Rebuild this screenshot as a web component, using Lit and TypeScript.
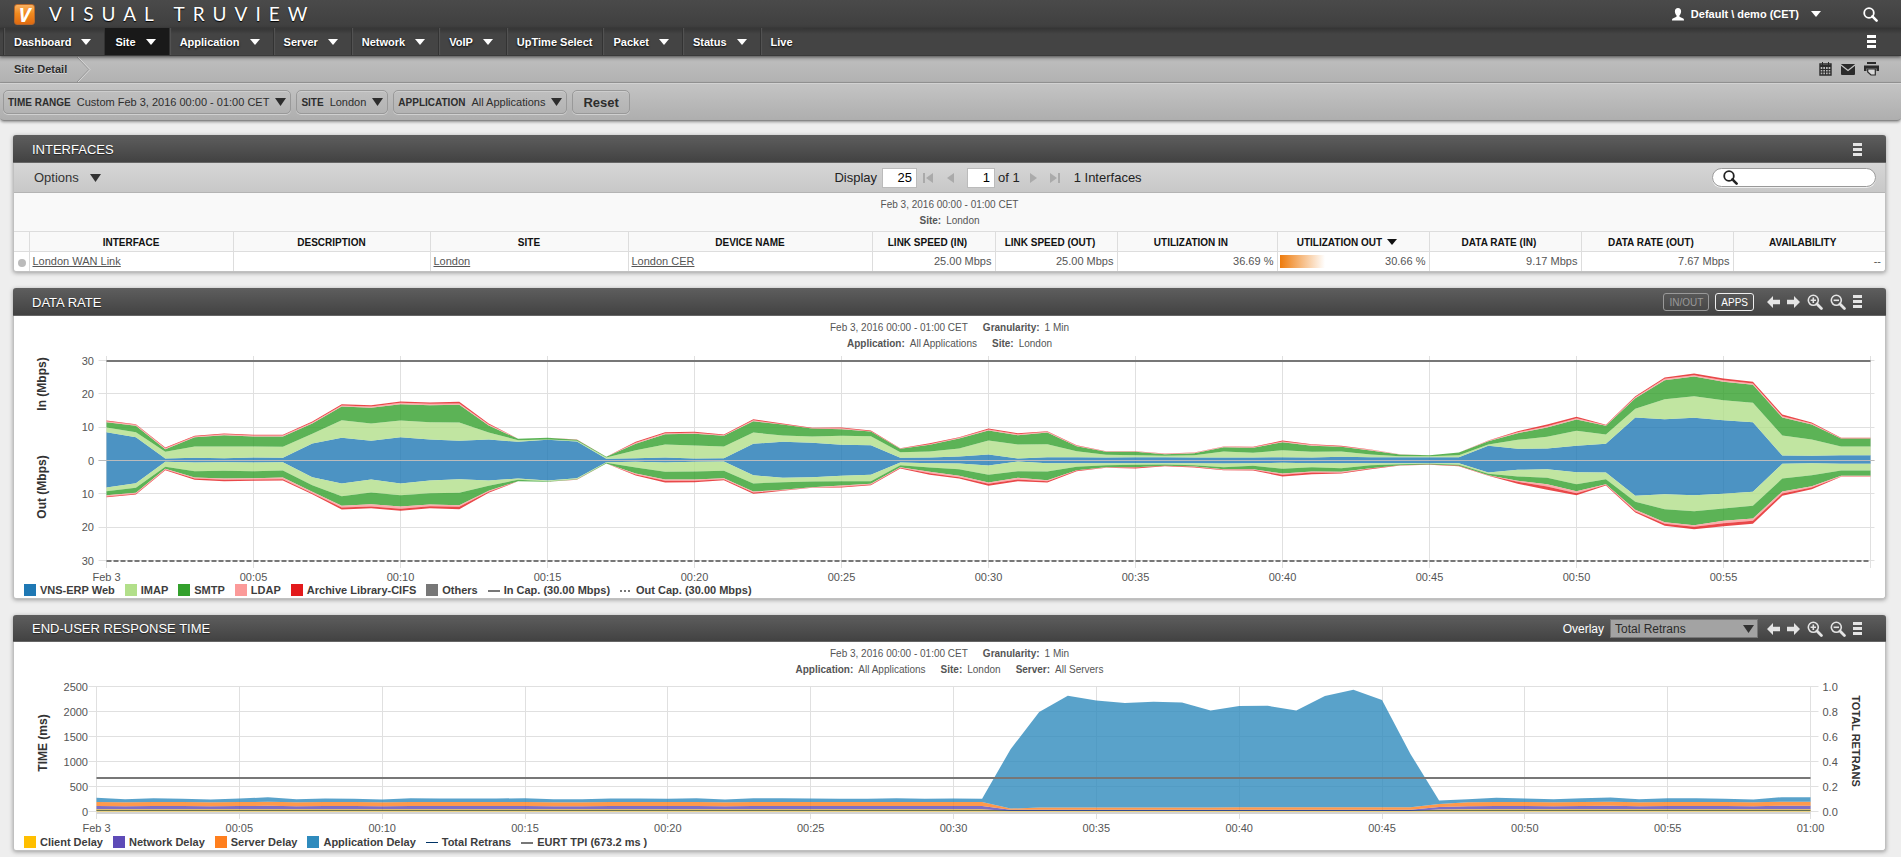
import { LitElement, html, svg, css, nothing, type TemplateResult } from "lit";
import { customElement, property, state } from "lit/decorators.js";
import { classMap } from "lit/directives/class-map.js";

/* ---------- data ---------- */

const NAV = [
  { label: "Dashboard", menu: true },
  { label: "Site", menu: true, active: true },
  { label: "Application", menu: true },
  { label: "Server", menu: true },
  { label: "Network", menu: true },
  { label: "VoIP", menu: true },
  { label: "UpTime Select", menu: false },
  { label: "Packet", menu: true },
  { label: "Status", menu: true },
  { label: "Live", menu: false },
];

const FILTERS = [
  { name: "TIME RANGE", value: "Custom Feb 3, 2016 00:00 - 01:00 CET" },
  { name: "SITE", value: "London" },
  { name: "APPLICATION", value: "All Applications" },
];

const COLUMNS = [
  { title: "", width: 16 },
  { title: "INTERFACE", width: 204 },
  { title: "DESCRIPTION", width: 197 },
  { title: "SITE", width: 198 },
  { title: "DEVICE NAME", width: 244 },
  { title: "LINK SPEED (IN)", width: 123, numeric: true },
  { title: "LINK SPEED (OUT)", width: 122, numeric: true },
  { title: "UTILIZATION IN", width: 160, numeric: true },
  { title: "UTILIZATION OUT", width: 152, numeric: true, sorted: true },
  { title: "DATA RATE (IN)", width: 152, numeric: true },
  { title: "DATA RATE (OUT)", width: 152, numeric: true },
  { title: "AVAILABILITY", width: 151, numeric: true },
];
const TOTAL_WIDTH = COLUMNS.reduce((sum, c) => sum + c.width, 0);

/* One row per minute, cumulative Mbps: VNS-ERP Web, IMAP, SMTP, LDAP, CIFS. */
const RATE_IN: number[][] = [
  [8.5, 9.9, 11.5, 11.8, 12], [7, 8.5, 10.4, 10.7, 10.9], [0.6, 2.6, 3.4, 3.7, 3.9],
  [0.8, 4.2, 7, 7.2, 7.4], [0.7, 4.2, 7.6, 7.9, 8.1], [0.9, 4.2, 7.2, 7.5, 7.7],
  [0.8, 4.1, 7.2, 7.5, 7.7], [5.1, 8, 11.1, 11.4, 11.7], [6.8, 12.1, 16.2, 16.5, 16.9],
  [5.9, 11.1, 15.8, 16.2, 16.6], [7, 12, 16.9, 17.3, 17.7], [6.3, 11.5, 16.6, 17, 17.4],
  [5.9, 11.4, 16.7, 17.1, 17.6], [6.3, 8.4, 10.5, 10.8, 11.1], [5.6, 6.1, 6.5, 6.5, 6.5],
  [6.2, 6.3, 6.8, 6.8, 6.8], [5.7, 5.9, 6.2, 6.2, 6.3], [0.5, 0.9, 1.1, 1.1, 1.1],
  [0.7, 3.1, 5, 5.3, 5.6], [0.9, 4.8, 7.9, 8.2, 8.5], [0.6, 4.5, 8, 8.3, 8.6],
  [0.7, 4.2, 7.4, 7.6, 7.8], [5, 8.4, 11.8, 12.1, 12.4], [5.6, 7.5, 10.8, 10.9, 11.1],
  [5.3, 7.2, 9.6, 9.7, 9.8], [4.7, 7.4, 9.4, 9.7, 9.9], [4.6, 7.3, 8.7, 8.8, 9],
  [0.8, 2.5, 3.5, 3.6, 3.7], [0.9, 2.7, 4.7, 4.9, 5.2], [1.2, 3.6, 6.6, 6.8, 7],
  [1.8, 6, 9, 9.3, 9.6], [0.6, 4.8, 7.6, 7.9, 8.2], [1, 4.9, 8.4, 8.6, 8.8],
  [1, 2.8, 4.3, 4.4, 4.6], [0.9, 1.7, 2.6, 2.7, 2.8], [1, 1.6, 2.6, 2.7, 2.8],
  [1, 1.4, 1.9, 2, 2.1], [0.9, 1.6, 2.2, 2.3, 2.4], [0.9, 2.7, 4, 4.1, 4.2],
  [0.9, 2.3, 3.8, 4, 4.1], [1, 3.1, 5.5, 5.7, 6], [0.9, 2.6, 4.4, 4.7, 4.9],
  [1.1, 2.7, 4.1, 4.2, 4.4], [1, 1.8, 3, 3.2, 3.3], [1, 1.3, 1.8, 1.9, 1.9],
  [1, 1.3, 1.6, 1.6, 1.6], [1, 1.6, 2.4, 2.4, 2.4], [4.4, 4.8, 5.8, 5.9, 6],
  [3.5, 6.2, 8.2, 8.5, 8.8], [3.6, 7.1, 9.9, 10.3, 10.8], [4.4, 8.9, 12.3, 12.7, 13.1],
  [5, 7.8, 10.4, 10.6, 10.7], [12.9, 15.5, 18.7, 19, 19.3], [12.4, 18.4, 24.1, 24.5, 24.9],
  [12.8, 19.3, 25.2, 25.6, 26.1], [12.1, 18.1, 23.6, 24.1, 24.6], [11.5, 17.3, 22.7, 23.1, 23.6],
  [1.5, 7.5, 12.9, 13.3, 13.8], [1.4, 6.3, 10.8, 11.1, 11.4], [1.6, 4.2, 6.6, 6.7, 6.8],
  [1.6, 4.2, 6.6, 6.7, 6.8],
];

const RATE_OUT: number[][] = [
  [8.1, 9.2, 10.4, 10.8, 11], [6.8, 8.2, 9.7, 10, 10.2], [0.4, 1.9, 2.5, 2.7, 2.9],
  [0.6, 3.2, 5.1, 5.4, 5.8], [0.5, 3.1, 5.4, 5.8, 6.2], [0.6, 3.2, 5.3, 5.7, 6.1],
  [0.5, 3, 5.1, 5.6, 6], [5, 7.4, 9.4, 9.8, 10.1], [6.9, 10.7, 13.6, 14.1, 14.7],
  [5.7, 9.6, 13.1, 13.8, 14.3], [6.9, 10.4, 13.8, 14.5, 15.1], [6, 9.8, 13.2, 13.7, 14.3],
  [5.6, 9.7, 13.4, 13.9, 14.6], [6, 7.6, 9.1, 9.4, 9.7], [5.4, 5.8, 6.2, 6.2, 6.2],
  [6, 6.2, 6.4, 6.4, 6.4], [5.3, 5.6, 5.7, 5.7, 5.8], [0.5, 0.7, 0.9, 0.9, 0.9],
  [0.4, 2.1, 3.9, 4.2, 4.5], [0.6, 3.4, 5.7, 6.1, 6.6], [0.4, 3.3, 5.7, 6.1, 6.5],
  [0.3, 3.1, 5.3, 5.6, 5.9], [4.4, 6.9, 9.3, 9.6, 10], [5.2, 6.5, 8.8, 8.9, 9.1],
  [5, 6.3, 8, 8.1, 8.2], [4.6, 6.2, 7.5, 7.9, 8.1], [4.3, 6.2, 7, 7.2, 7.4],
  [0.6, 1.4, 2, 2.2, 2.4], [0.8, 2.1, 3.4, 3.8, 4.3], [0.9, 2.6, 4.6, 5, 5.4],
  [1.5, 4.3, 6.6, 7, 7.6], [0.3, 3.2, 5.2, 5.7, 6.2], [0.8, 3.3, 5.9, 6.2, 6.6],
  [0.8, 1.9, 2.9, 3, 3.2], [0.8, 1.4, 2, 2.1, 2.2], [0.8, 1.3, 2, 2.1, 2.4],
  [0.8, 1.2, 1.6, 1.6, 1.7], [0.8, 1.4, 1.8, 1.9, 2.1], [0.9, 2, 2.6, 2.8, 2.9],
  [0.8, 1.6, 2.6, 2.8, 3], [0.7, 2.5, 3.9, 4.3, 4.8], [0.8, 2, 3.3, 3.6, 4.1],
  [0.8, 2.3, 3.4, 3.7, 3.9], [0.8, 1.4, 2.3, 2.4, 2.6], [0.8, 1.1, 1.4, 1.4, 1.5],
  [0.8, 1, 1.2, 1.2, 1.3], [0.8, 1.3, 1.6, 1.6, 1.7], [3.6, 4, 4.4, 4.5, 4.6],
  [2.8, 4.8, 6.1, 6.4, 7], [2.6, 5.2, 7.1, 7.8, 8.8], [3.5, 7.1, 9.2, 9.8, 10.4],
  [3.6, 5.6, 7.1, 7.3, 7.5], [10.6, 12.4, 14.8, 15.2, 15.6], [10.1, 14.6, 18.5, 19, 19.6],
  [10.4, 15.2, 19.4, 19.9, 20.6], [10, 14.4, 18.1, 18.8, 19.7], [9.4, 13.6, 17.4, 18.1, 19],
  [1, 5.4, 9.3, 9.9, 10.6], [0.8, 4.4, 7.7, 8.1, 8.6], [1, 3, 4.6, 4.8, 4.9],
  [1, 3, 4.6, 4.8, 4.9],
];

const RATE_COLORS = ["#1f78b4", "#b2df8a", "#33a02c", "#fb9a99", "#e31a1c"];

/* Total response time in ms for each minute. */
const RESPONSE = [
  273, 247, 267, 253, 240, 260, 283, 247, 260, 253, 240, 267, 260, 260, 260, 267, 247, 247, 260, 260,
  253, 263, 240, 267, 267, 260, 253, 257, 263, 253, 260, 253, 1247, 1987, 2313, 2220, 2167, 2193, 2180,
  2020, 2107, 2113, 2020, 2307, 2433, 2227, 1147, 220, 247, 273, 260, 247, 267, 280, 247, 267, 267, 253,
  240, 287, 287,
];

/* Cumulative ms: client, network, server, application. */
const DELAYS: number[][] = RESPONSE.map((total, m) => {
  if (m >= 32 && m <= 46) return [12, 36, m === 32 ? 58 : m < 40 ? 80 : 86, total];
  if (m === 47) return [40, 90, 150, total];
  const swing = (total - 255) / 4;
  return [46, 108 + swing, 188 + swing, total];
});

const DELAY_COLORS = ["#ffbf00", "#5e4bb7", "#ff7f1e", "#2f8bbd"];

/* ---------- shared pieces ---------- */

const caret = (cls = "") => html`<svg class="caret ${cls}" width="10" height="6" viewBox="0 0 10 6" preserveAspectRatio="none" aria-hidden="true"><path d="M0 0h10L5 6z" fill="currentColor"/></svg>`;
const bars = html`<svg width="9" height="14" viewBox="0 0 9 14" aria-hidden="true"><path d="M0 0h9v3H0zM0 5h9v3H0zM0 10h9v3H0z" fill="currentColor"/></svg>`;
const magnifier = html`<svg width="15" height="15" viewBox="0 0 15 15" aria-hidden="true"><circle cx="6" cy="6" r="4.8" fill="none" stroke="currentColor" stroke-width="1.8"/><path d="M9.4 9.4l4.2 4.2" stroke="currentColor" stroke-width="2.6" stroke-linecap="round"/></svg>`;
const zoomIcon = (plus: boolean) => html`<svg width="16" height="16" viewBox="0 0 16 16" aria-hidden="true"><circle cx="6.3" cy="6.3" r="5" fill="none" stroke="currentColor" stroke-width="1.6"/><path d="M10 10l4.4 4.4" stroke="currentColor" stroke-width="2.8" stroke-linecap="round"/><path d="M3.6 6.3h5.4${plus ? "M6.3 3.6v5.4" : ""}" stroke="currentColor" stroke-width="1.6"/></svg>`;
const arrow = (right: boolean) => html`<svg width="13" height="12" viewBox="0 0 13 12" aria-hidden="true"><path d=${right ? "M13 6L7 0v3.7H0v4.6h7V12z" : "M0 6l6-6v3.7h7v4.6H6V12z"} fill="currentColor"/></svg>`;

const base = css`
  * { box-sizing: border-box; }
  button { font: inherit; color: inherit; background: none; border: 0; padding: 0; margin: 0; cursor: pointer; display: inline-flex; align-items: center; }
  svg { display: block; flex: none; }
`;

/* ---------- header ---------- */

@customElement("top-header")
class TopHeader extends LitElement {
  static styles = [base, css`
    :host { display: block; color: #fff; font-weight: bold; font-size: 11px; }
    .brand { display: flex; align-items: center; height: 28px; padding: 0 23px 0 14px; background: linear-gradient(#4a4a4a, #3f3f3f); }
    .mark { width: 21px; height: 21px; border-radius: 3px; background: linear-gradient(#f9b060, #f08a1e 45%, #e06a10); border: 1px solid #b8682a; font: italic bold 20px/19px "Open Sans", sans-serif; text-align: center; }
    .name { margin: 0 auto 0 14px; font: 400 19px/26px Lato, sans-serif; letter-spacing: 8px; text-shadow: 0 1px 1px #000; }
    .user { gap: 7px; }
    .user .caret { margin-left: 5px; }
    .find { margin-left: 42px; }
    .bar { display: flex; align-items: stretch; height: 28px; padding: 0 25px 0 3px; background: linear-gradient(#343434, #444 6px, #444); border-bottom: 1px solid #3a3a3a; box-shadow: 0 1px 3px rgba(0, 0, 0, .5); position: relative; }
    .tabs { display: flex; margin-right: auto; }
    .tab { padding: 0 13px 0 10px; gap: 10px; border-left: 1px solid #333; box-shadow: inset 1px 0 1px #555; text-shadow: 0 1px 2px #000; }
    .tab.active { background: #191919; box-shadow: none; }
    .tab.plain { padding: 0 10px; }
  `];
  render() {
    return html`
      <header>
        <div class="brand">
          <span class="mark">V</span>
          <span class="name">VISUAL TRUVIEW</span>
          <button class="user" type="button">
            <svg width="12" height="13" viewBox="0 0 12 13" aria-hidden="true"><path d="M6 0c2 0 3.2 1.4 3.1 3.4C9 5.200 8.300 6.500 7.500 7.300v1.400l3.700 1.700c.6.300.8.800.8 2.100H0c0-1.300.2-1.800.8-2.100l3.700-1.700V7.300C3.700 6.500 3 5.200 2.900 3.400 2.800 1.400 4 0 6 0z" fill="currentColor"/></svg>
            <span>Default \\ demo (CET)</span>
            ${caret()}
          </button>
          <button class="find" type="button" aria-label="Search">${magnifier}</button>
        </div>
        <nav class="bar">
          <div class="tabs">
            ${NAV.map((n) => html`<button type="button" class=${classMap({ tab: true, active: !!n.active, plain: !n.menu })}>${n.label}${n.menu ? caret() : nothing}</button>`)}
          </div>
          <button type="button" aria-label="Menu">${bars}</button>
        </nav>
      </header>`;
  }
}

@customElement("filter-bar")
class FilterBar extends LitElement {
  static styles = [base, css`
    :host { display: block; color: #2d2d2d; text-shadow: 0 1px 0 rgba(255, 255, 255, .5); }
    .crumbs { display: flex; align-items: center; height: 27px; padding: 0 22px 0 14px; background: linear-gradient(#a4a4a4, #bcbcbc 6px, #b2b2b2); border-bottom: 1px solid #999; font-weight: bold; font-size: 11px; }
    .crumbs a { color: inherit; text-decoration: none; }
    .sep { margin: 0 auto 0 10px; }
    .tools { display: flex; align-items: center; gap: 9px; }
    .filters { display: flex; align-items: center; gap: 5px; height: 38px; padding: 0 3px; background: linear-gradient(#c4c4c4, #aeaeae); border-top: 1px solid #d2d2d2; border-bottom: 1px solid #888; border-radius: 0 0 4px 4px; box-shadow: 0 1px 3px rgba(0, 0, 0, .4); }
    .pill { height: 24px; padding: 0 4px; gap: 6px; border: 1px solid #999; border-radius: 5px; box-shadow: 0 1px 0 #d0d0d0, inset 0 1px 0 #cdcdcd; background: linear-gradient(#bfbfbf, #b3b3b3); }
    .pill b { font-size: 10px; }
    .pill span { font-size: 11px; }
    .pill.reset { padding: 0 10px; font-weight: bold; font-size: 13px; }
    .pill .caret { width: 11px; height: 8px; }
  `];
  render() {
    return html`
      <div class="crumbs">
        <a href="#site">Site Detail</a>
        <svg class="sep" width="14" height="25" viewBox="0 0 14 25" aria-hidden="true"><path d="M0 0l12 12.500L0 25" fill="none" stroke="#8e8e8e"/><path d="M1 0l12 12.500L1 25" fill="none" stroke="#d8d8d8"/></svg>
        <div class="tools">
          <button type="button" aria-label="Schedule"><svg width="13" height="14" viewBox="0 0 13 14"><path d="M1 2h11v11H1z" fill="none" stroke="#2b2b2b" stroke-width="1.4"/><path d="M1 3h11v2H1z" fill="#2b2b2b"/><path d="M1 7.500h11M1 10h11M3.800 5v8M6.500 5v8M9.200 5v8M3.500 0v3M9.500 0v3" stroke="#2b2b2b"/></svg></button>
          <button type="button" aria-label="Mail"><svg width="14" height="12" viewBox="0 0 14 12"><rect y="1" width="14" height="11" rx="1" fill="#2b2b2b"/><path d="M0 2l7 5.500L14 2" fill="none" stroke="#c8c8c8" stroke-width="1.200"/></svg></button>
          <button type="button" aria-label="Print"><svg width="15" height="14" viewBox="0 0 15 14"><path d="M3 0h9v2H3zM0 3.500h15V9h-2.500V6.500h-10V9H0z" fill="#2b2b2b"/><path d="M3.700 7h7.600v6H7L3.700 10z" fill="#d8d8d8" stroke="#2b2b2b" stroke-width="1.200"/></svg></button>
        </div>
      </div>
      <div class="filters">
        ${FILTERS.map((f) => html`<button type="button" class="pill"><b>${f.name}</b><span>${f.value}</span>${caret()}</button>`)}
        <button type="button" class="pill reset">Reset</button>
      </div>`;
  }
}

/* ---------- panel ---------- */

@customElement("report-panel")
class ReportPanel extends LitElement {
  static styles = [base, css`
    :host { display: block; background: #fff; border: 1px solid #c0c0c0; border-top: 0; border-radius: 3px; box-shadow: 0 1px 4px rgba(0, 0, 0, .35); }
    .head { display: flex; align-items: center; height: 28px; margin: 0 -1px; padding: 2px 24px 0 19px; border-radius: 3px 3px 0 0; background: linear-gradient(#5e5e5e, #424242); border-bottom: 1px solid #666; color: #e4e4e4; }
    :host([compact]) .head { height: 27px; }
    h2 { margin: 0 auto 0 0; font-size: 13px; font-weight: normal; color: #fff; text-shadow: 0 1px 1px #222; }
    .nav { display: flex; align-items: center; gap: 7px; margin-left: 13px; }
    .more { margin-left: 7px; }
  `];
  @property() heading = "";
  @property({ type: Boolean }) zoomable = false;
  render() {
    return html`
      <section>
        <div class="head">
          <h2>${this.heading}</h2>
          <slot name="actions"></slot>
          ${this.zoomable ? html`<div class="nav">
            <button type="button" aria-label="Back">${arrow(false)}</button>
            <button type="button" aria-label="Forward">${arrow(true)}</button>
            <button type="button" aria-label="Zoom in">${zoomIcon(true)}</button>
            <button type="button" aria-label="Zoom out">${zoomIcon(false)}</button>
          </div>` : nothing}
          <button class="more" type="button" aria-label="Panel menu">${bars}</button>
        </div>
        <slot></slot>
      </section>`;
  }
}

/* ---------- interfaces table ---------- */

@customElement("interface-table")
class InterfaceTable extends LitElement {
  static styles = [base, css`
    :host { display: block; color: #555; font-size: 11px; }
    .bar { display: grid; grid-template-columns: 1fr auto 1fr; align-items: center; height: 30px; padding: 0 9px 0 20px; background: linear-gradient(#d6d6d6, #c8c8c8); border-bottom: 1px solid #b4b4b4; color: #222; font-size: 13px; }
    .options { gap: 11px; justify-self: start; color: #333; }
    .options .caret { width: 11px; height: 8px; }
    .pager { display: flex; align-items: center; padding-left: 66px; }
    .pager input { height: 20px; margin: 0 0 0 5px; padding: 2px 4px; border: 1px solid #bbb; background: #fff; font: inherit; text-align: right; color: #000; }
    .rows { width: 35px; }
    .pages { width: 28px; }
    .step { color: #aaa; }
    .first { margin-left: 6px; }
    .prev { margin: 0 8px 0 14px; }
    .of { margin-left: 3px; }
    .next { margin-left: 10px; }
    .last { margin: 0 14px 0 13px; }
    .search { justify-self: end; display: flex; align-items: center; gap: 4px; width: 164px; height: 19px; padding: 0 10px; border: 1px solid #999; border-radius: 10px; background: #fff; box-shadow: 0 1px 0 #eee; }
    .search input { flex: 1; min-width: 0; height: 15px; border: 0; padding: 0; outline: 0; background: none; font: inherit; }
    .meta { height: 38px; padding-top: 4px; background: #f9f9f9; }
    table { width: 100%; border-collapse: collapse; table-layout: fixed; }
    th, td { border: 1px solid #ddd; height: 19px; padding: 0 4px 0 2px; white-space: nowrap; overflow: hidden; }
    tr > :first-child { border-left: 0; padding: 0; }
    tr > :last-child { border-right: 0; }
    tbody td { border-bottom: 0; }
    th { height: 20px; padding-top: 2px; background: #f9f9f9; color: #111; font-size: 10px; }
    th.numeric { padding-right: 16px; }
    th .caret { display: inline-block; margin-left: 5px; vertical-align: 1px; }
    td a { color: inherit; }
    .num { text-align: right; }
    .dot { width: 8px; height: 8px; margin: 3px auto 0; border-radius: 50%; background: #bbb; }
    .meter { display: flex; align-items: center; justify-content: space-between; }
    .level { height: 13px; background: linear-gradient(90deg, #ee7b0c, #fff); }
  `];
  render() {
    return html`
      <div class="bar">
        <button class="options" type="button">Options ${caret()}</button>
        <div class="pager">
          <label for="rows">Display</label><input id="rows" class="rows" value="25">
          <button type="button" class="step first" aria-label="First page"><svg width="10" height="10" viewBox="0 0 10 10"><path d="M0 0h2v10H0zM10 0v10L3 5z" fill="currentColor"/></svg></button>
          <button type="button" class="step prev" aria-label="Previous page"><svg width="7" height="10" viewBox="0 0 7 10"><path d="M7 0v10L0 5z" fill="currentColor"/></svg></button>
          <input class="pages" aria-label="Page" value="1"><span class="of">of 1</span>
          <button type="button" class="step next" aria-label="Next page"><svg width="7" height="10" viewBox="0 0 7 10"><path d="M0 0v10l7-5z" fill="currentColor"/></svg></button>
          <button type="button" class="step last" aria-label="Last page"><svg width="10" height="10" viewBox="0 0 10 10"><path d="M8 0h2v10H8zM0 0v10l7-5z" fill="currentColor"/></svg></button>
          <span>1 Interfaces</span>
        </div>
        <label class="search">${magnifier}<input type="search" aria-label="Search interfaces"></label>
      </div>
      <div class="meta"><meta-lines .lines=${[[["", "Feb 3, 2016 00:00 - 01:00 CET"]], [["Site:", "London"]]]}></meta-lines></div>
      <table>
        <colgroup>${COLUMNS.map((c) => html`<col style="width:${(c.width / TOTAL_WIDTH) * 100}%">`)}</colgroup>
        <thead><tr>${COLUMNS.map((c) => html`<th scope="col" class=${c.numeric ? "numeric" : ""}>${c.title}${c.sorted ? caret() : nothing}</th>`)}</tr></thead>
        <tbody><tr>
          <td><div class="dot"></div></td>
          <td><a href="#link">London WAN Link</a></td>
          <td></td>
          <td><a href="#site">London</a></td>
          <td><a href="#device">London CER</a></td>
          <td class="num">25.00 Mbps</td>
          <td class="num">25.00 Mbps</td>
          <td class="num">36.69 %</td>
          <td><div class="meter"><span class="level" style="width:30.66%"></span><span>30.66 %</span></div></td>
          <td class="num">9.17 Mbps</td>
          <td class="num">7.67 Mbps</td>
          <td class="num">--</td>
        </tr></tbody>
      </table>`;
  }
}

@customElement("meta-lines")
class MetaLines extends LitElement {
  static styles = css`
    :host { display: block; font-size: 10px; line-height: 16px; text-align: center; color: #555; }
    .line { display: flex; justify-content: center; gap: 15px; }
    b { margin-right: 5px; }
  `;
  @property({ attribute: false }) lines: [string, string][][] = [];
  render() {
    return this.lines.map((l) => html`<div class="line">${l.map(([k, v]) => html`<span>${k ? html`<b>${k}</b>` : nothing}${v}</span>`)}</div>`);
  }
}

@customElement("chart-legend")
class ChartLegend extends LitElement {
  static styles = css`
    :host { display: flex; flex-wrap: wrap; gap: 10px; padding: 1px 10px; font-weight: bold; font-size: 11px; line-height: 14px; color: #3d3d3d; }
    .item { display: flex; align-items: center; gap: 4px; }
    svg { display: block; }
  `;
  @property({ attribute: false }) items: { label: string; color: string; kind?: string }[] = [];
  render() {
    return this.items.map((i) => html`<span class="item"><svg width="12" height="12" viewBox="0 0 12 12" aria-hidden="true">${
      i.kind === "line" ? svg`<path d="M0 7h12" stroke=${i.color} stroke-width="2"/>`
      : i.kind === "thin" ? svg`<path d="M0 6.500h12" stroke=${i.color}/>`
      : i.kind === "dots" ? svg`<path d="M0 7h12" stroke=${i.color} stroke-width="2" stroke-dasharray="2 2"/>`
      : svg`<path d="M0 0h12v12H0z" fill=${i.color}/>`}</svg>${i.label}</span>`);
  }
}

/* ---------- charts ---------- */

abstract class TimeChart extends LitElement {
  static styles = css`
    :host { display: block; }
    svg { display: block; width: 100%; overflow: visible; }
    .grid { stroke: #e0e0e0; fill: none; }
    .label { font-size: 11px; fill: #555; }
    .mid { text-anchor: middle; }
    .end { text-anchor: end; }
    .title { font-size: 12px; font-weight: bold; fill: #333; text-anchor: middle; }
    .title.small { font-size: 11px; }
    .area { fill-opacity: .8; }
  `;
  @state() width = 0;
  private observer?: ResizeObserver;

  connectedCallback() {
    super.connectedCallback();
    this.observer = new ResizeObserver(() => { this.width = this.clientWidth; });
    this.observer.observe(this);
  }
  disconnectedCallback() {
    super.disconnectedCallback();
    this.observer?.disconnect();
  }
  firstUpdated() { this.width = this.clientWidth; }

  protected areas(rows: number[][], colors: string[], x: (m: number) => number, y: (v: number) => number) {
    return colors.map((color, s) => {
      const top = rows.map((r, m) => `${x(m).toFixed(1)},${y(r[s]).toFixed(1)}`);
      const bottom = rows.map((r, m) => `${x(m).toFixed(1)},${y(s ? r[s - 1] : 0).toFixed(1)}`).reverse();
      return svg`<polygon class="area" fill=${color} points=${[...top, ...bottom].join(" ")}/>`;
    });
  }
  protected clock(m: number) {
    return m === 0 ? "Feb 3" : m === 60 ? "01:00" : `00:${String(m).padStart(2, "0")}`;
  }
  abstract draw(width: number): unknown;
  abstract chartHeight: number;
  render() {
    return html`<svg height=${this.chartHeight} role="img" aria-label="Time series chart">${this.width ? this.draw(this.width) : nothing}</svg>`;
  }
}

@customElement("data-rate-chart")
class DataRateChart extends TimeChart {
  chartHeight = 230;
  draw(width: number) {
    const left = 92.5, right = Math.round(width - 15) + 0.5, zero = 108.5, unit = 10 / 3;
    const x = (m: number) => left + ((right - left) * m) / 60;
    const snap = (v: number) => Math.floor(v) + 0.5;
    const ticks = [-30, -20, -10, 0, 10, 20, 30];
    const minutes = Array.from({ length: 13 }, (_, i) => i * 5);
    return svg`
      ${minutes.map((m) => svg`<path class="grid" d="M${snap(x(m))} 4V216"/>`)}
      ${ticks.map((t) => svg`<path class="grid" d="M${left - 8} ${snap(zero + t * unit)}H${right + 4}"/>
        <text class="label end" x="80" y=${Math.round(zero + t * unit) + 4}>${Math.abs(t)}</text>`)}
      ${minutes.slice(0, 12).map((m) => svg`<text class="label mid" x=${x(m)} y="229">${this.clock(m)}</text>`)}
      ${this.areas(RATE_IN, RATE_COLORS, x, (v) => zero - v * unit)}
      ${this.areas(RATE_OUT, RATE_COLORS, x, (v) => zero + v * unit)}
      <path d="M${left - 8} ${zero}H${right + 4}" stroke="#bbb" fill="none"/>
      <path d="M${left} 9H${right}" stroke="#777" stroke-width="2" fill="none"/>
      <path d="M${left} 209H${right}" stroke="#777" stroke-width="2" stroke-dasharray="5 2" fill="none"/>
      <text class="title" transform="translate(32 32) rotate(-90)">In (Mbps)</text>
      <text class="title" transform="translate(32 135) rotate(-90)">Out (Mbps)</text>`;
  }
}

@customElement("response-chart")
class ResponseChart extends TimeChart {
  chartHeight = 156;
  draw(width: number) {
    const left = 82.5, right = Math.round(width - 75) + 0.5, zero = 133.5, unit = 0.05;
    const x = (m: number) => left + ((right - left) * m) / 60;
    const y = (v: number) => zero - v * unit;
    const snap = (v: number) => Math.floor(v) + 0.5;
    const minutes = Array.from({ length: 13 }, (_, i) => i * 5);
    return svg`
      ${minutes.map((m) => svg`<path class="grid" d="M${snap(x(m))} 8V141"/>
        <text class="label mid" x=${x(m)} y="154">${this.clock(m)}</text>`)}
      ${[0, 500, 1000, 1500, 2000, 2500].map((v, i) => svg`<path class="grid" d="M${left - 8} ${y(v)}H${right + 8}"/>
        <text class="label end" x="74" y=${y(v) + 4.5}>${v}</text>
        <text class="label" x=${right + 12} y=${y(v) + 4.5}>${(i / 5).toFixed(1)}</text>`)}
      <path d="M${left} ${zero + 1.5}H${right}" stroke="#d4d4d4" stroke-width="2" fill="none"/>
      ${this.areas(DELAYS, DELAY_COLORS, x, y)}
      <path d="M${left} ${zero - 1}H${right}" stroke="#003366" stroke-opacity=".6" fill="none"/>
      <path d="M${left} 100H${right}" stroke="#777" stroke-width="2" fill="none"/>
      <text class="title" transform="translate(33 65) rotate(-90)">TIME (ms)</text>
      <text class="title small" transform="translate(${right + 41} 63) rotate(90)">TOTAL RETRANS</text>`;
  }
}

/* ---------- page ---------- */

@customElement("app-root")
class AppRoot extends LitElement {
  static styles = [base, css`
    :host { display: block; min-height: 100vh; background: #eee; font-family: "Liberation Sans", Arial, sans-serif; }
    main { display: grid; grid-template-columns: minmax(0, 1fr); gap: 16px; padding: 14px 15px 7px 13px; }
    .body { padding-top: 4px; }
    .toggles { display: flex; gap: 6px; font-size: 10px; color: #fff; }
    .toggle { height: 18px; padding: 0 5px; border: 1px solid #eee; border-radius: 3px; }
    .toggle.off { color: #999; border-color: #999; }
    .overlay { display: flex; align-items: center; gap: 6px; color: #fff; font-size: 12px; margin-right: -4px; }
    .pick { position: relative; display: flex; }
    .pick select { appearance: none; width: 148px; height: 19px; padding: 0 24px 0 4px; border: 1px solid #777; border-radius: 0; background: #a3a3a3; color: #2b2b2b; font: inherit; }
    .pick svg { position: absolute; right: 4px; top: 6px; width: 11px; height: 8px; color: #333; pointer-events: none; }
  `];
  render(): TemplateResult {
    return html`
      <top-header></top-header>
      <filter-bar></filter-bar>
      <main>
        <report-panel heading="INTERFACES"><interface-table></interface-table></report-panel>

        <report-panel heading="DATA RATE" zoomable>
          <div slot="actions" class="toggles">
            <button type="button" class="toggle off">IN/OUT</button>
            <button type="button" class="toggle">APPS</button>
          </div>
          <div class="body">
            <meta-lines .lines=${[
              [["", "Feb 3, 2016 00:00 - 01:00 CET"], ["Granularity:", "1 Min"]],
              [["Application:", "All Applications"], ["Site:", "London"]],
            ]}></meta-lines>
            <data-rate-chart></data-rate-chart>
            <chart-legend .items=${[
              { label: "VNS-ERP Web", color: "#1f78b4" },
              { label: "IMAP", color: "#b2df8a" },
              { label: "SMTP", color: "#33a02c" },
              { label: "LDAP", color: "#fb9a99" },
              { label: "Archive Library-CIFS", color: "#e31a1c" },
              { label: "Others", color: "#777" },
              { label: "In Cap. (30.00 Mbps)", color: "#777", kind: "line" },
              { label: "Out Cap. (30.00 Mbps)", color: "#777", kind: "dots" },
            ]}></chart-legend>
          </div>
        </report-panel>

        <report-panel heading="END-USER RESPONSE TIME" zoomable compact>
          <div slot="actions" class="overlay">
            <label for="overlay">Overlay</label>
            <span class="pick"><select id="overlay"><option>Total Retrans</option></select>${caret()}</span>
          </div>
          <div class="body">
            <meta-lines .lines=${[
              [["", "Feb 3, 2016 00:00 - 01:00 CET"], ["Granularity:", "1 Min"]],
              [["Application:", "All Applications"], ["Site:", "London"], ["Server:", "All Servers"]],
            ]}></meta-lines>
            <response-chart></response-chart>
            <chart-legend .items=${[
              { label: "Client Delay", color: "#ffbf00" },
              { label: "Network Delay", color: "#5e4bb7" },
              { label: "Server Delay", color: "#ff7f1e" },
              { label: "Application Delay", color: "#2f8bbd" },
              { label: "Total Retrans", color: "#003366", kind: "thin" },
              { label: "EURT TPI (673.2 ms )", color: "#777", kind: "line" },
            ]}></chart-legend>
          </div>
        </report-panel>
      </main>`;
  }
}
